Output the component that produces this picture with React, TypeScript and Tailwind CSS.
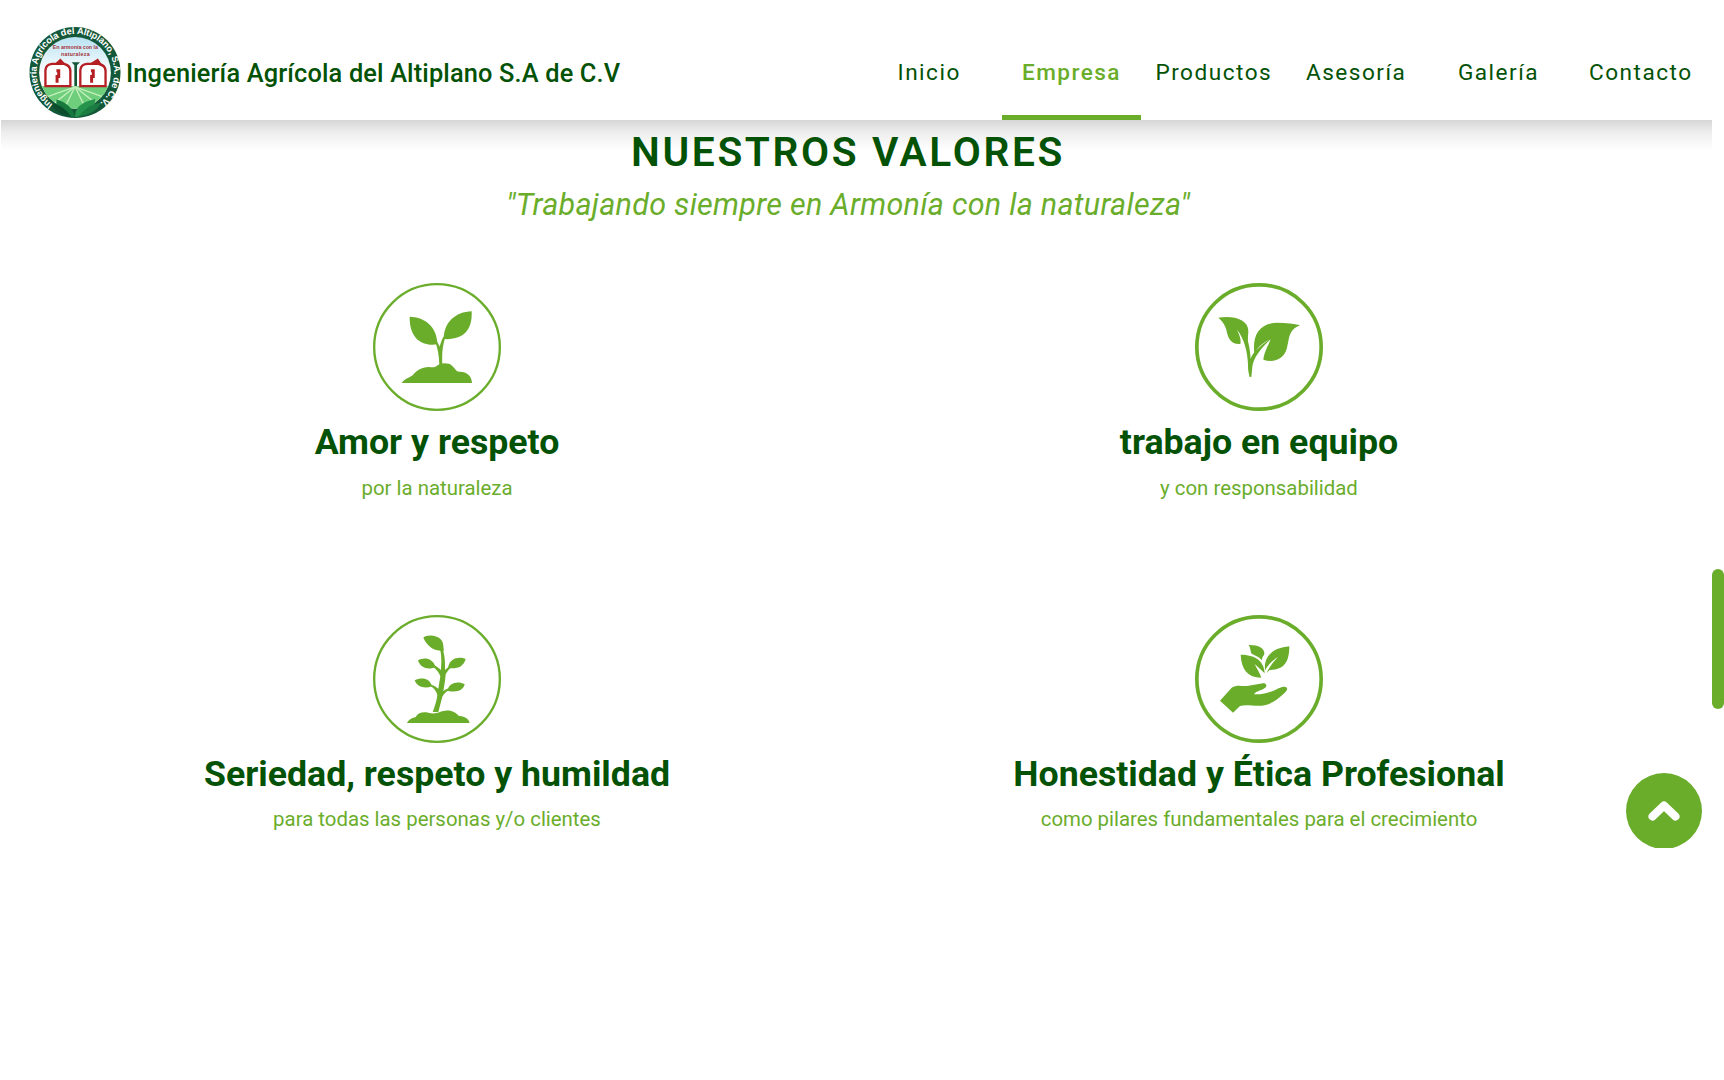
import type { ReactNode } from "react";

const navItems = ["Inicio", "Empresa", "Productos", "Asesoría", "Galería", "Contacto"];

function Logo() {
  return (
    <svg viewBox="0 0 276 280" className="h-[93px] w-[92px] shrink-0" aria-label="Logo">
      <defs>
        <path id="ring" d="M71 236A117 117 0 1 1 207 236" />
        <linearGradient id="sky" x1="0" y1="0" x2="0" y2="1">
          <stop offset="0" stopColor="#b4e0f0" />
          <stop offset="0.5" stopColor="#ffffff" />
        </linearGradient>
        <clipPath id="inner">
          <circle cx="138" cy="141" r="108" />
        </clipPath>
      </defs>
      <circle cx="138" cy="140" r="137" fill="#14583a" />
      <g clipPath="url(#inner)">
        <rect x="20" y="25" width="240" height="240" fill="url(#sky)" />
        <rect x="20" y="181" width="240" height="100" fill="#6fce7c" />
        <g stroke="#c5f0bd" strokeWidth="4">
          <path d="M138 183L30 222M138 183L60 245M138 183L100 260M138 183L176 260M138 183L216 245M138 183L246 222" />
        </g>
        <g fill="none" stroke="#b51f24" strokeWidth="7">
          <path d="M49 181V133Q50 116 69 114H105Q123 117 124 135V181Z" fill="#fff" />
          <path d="M154 181V133Q155 116 174 114H210Q229 117 230 135V181Z" fill="#fff" />
          <path d="M82 135H89V152H84V171M186 135H193V152H188V171" strokeWidth="9" />
        </g>
        <path d="M78 113L94 98L122 128L108 118ZM183 113L207 98L225 125L211 118Z" fill="#b51f24" />
        <path d="M128 109H153L144 118V181H136V118Z" fill="#14583a" />
      </g>
      <path d="M138 275Q78 261 82 221Q130 235 138 275Z" fill="#16783d" />
      <path d="M138 275Q137 232 199 220Q197 266 138 275Z" fill="#26944c" />
      <path d="M62 232Q100 235 126 272Q84 268 62 232Z" fill="#0c4d2e" />
      <path d="M218 230Q176 235 150 272Q196 268 218 230Z" fill="#1c7c42" />
      <g fill="#a3353b" fontFamily="Liberation Sans" fontWeight="700" fontSize="16" textAnchor="middle">
        <text x="139" y="68" textLength="136">En armonía con la</text>
        <text x="139" y="89" textLength="86">naturaleza</text>
      </g>
      <text fill="#fff" fontFamily="Liberation Sans" fontWeight="700" fontSize="28">
        <textPath href="#ring" textLength="582">Ingeniería Agrícola del Altiplano, S.A. de C.V.</textPath>
      </text>
    </svg>
  );
}

function Badge({ stroke, children }: { stroke: number; children: ReactNode }) {
  return (
    <svg viewBox="23 25 384 384" className="size-32 text-[#6aad2b]" fill="currentColor">
      <circle cx="215" cy="217" r={192 - stroke / 2} fill="none" stroke="currentColor" strokeWidth={stroke} />
      {children}
    </svg>
  );
}

const values = [
  {
    title: "Amor y respeto",
    text: "por la naturaleza",
    icon: (
      <Badge stroke={7}>
        <path d="M133 126C175 127 215 153 216 209C166 216 132 188 133 126Z" />
        <path d="M319 110C270 112 235 143 235 193C290 197 322 170 319 110Z" />
        <path d="M210 203C217 220 221 242 222 270H231C230 243 230 218 240 188L234 186C227 200 226 207 223 216L216 202Z" />
        <path d="M109 325C116 314 132 309 142 302C151 289 170 277 190 277C201 278 207 279 213 275C224 263 251 264 260 273C270 280 270 290 282 291C303 290 319 302 320 325Z" />
      </Badge>
    ),
  },
  {
    title: "trabajo en equipo",
    text: "y con responsabilidad",
    icon: (
      <Badge stroke={11}>
        <path d="M93 129C140 122 183 135 183 169C183 180 181 188 182 200C187 220 189 238 190 253C194 237 212 219 247 194C222 208 207 222 201 238C194 177 219 145 270 144C298 145 321 147 338 152C302 167 307 191 299 219C291 252 261 266 228 255C231 232 242 214 250 194C219 222 199 250 195 276L192 307H187C184 293 182 289 182 271C181 233 171 191 149 165C157 181 162 196 159 208C130 210 121 188 117 165C112 148 104 139 93 129Z" />
      </Badge>
    ),
  },
  {
    title: "Seriedad, respeto y humildad",
    text: "para todas las personas y/o clientes",
    icon: (
      <Badge stroke={7}>
        <path d="M174 93C182 84 213 84 226 98C236 109 233 119 236 132C207 134 186 120 174 93Z" />
        <path d="M158 161C175 151 201 152 211 181C188 191 165 184 158 161Z" />
        <path d="M148 221C168 211 193 213 200 239C178 247 156 242 148 221Z" />
        <path d="M301 157C282 148 252 153 248 184C273 188 295 181 301 157Z" />
        <path d="M298 233C279 222 249 228 247 252C272 259 294 252 298 233Z" />
        <path d="M216 112C226 126 228 143 228 163L227 190C218 183 213 178 204 175L201 179C213 188 221 198 225 209L219 246C212 240 206 236 198 234L195 238C207 245 213 254 216 265C214 285 208 299 202 316H219L231 270C236 261 241 256 251 250L249 245C242 248 237 251 234 254C237 235 240 219 241 203C246 194 250 188 259 182L256 177C250 180 244 185 239 190C240 161 237 136 230 124Z" />
        <path d="M125 349C130 338 141 334 151 331C159 317 173 315 189 318C214 325 221 313 240 312C260 310 273 319 281 328C295 328 309 334 313 349Z" />
      </Badge>
    ),
  },
  {
    title: "Honestidad y Ética Profesional",
    text: "como pilares fundamentales para el crecimiento",
    icon: (
      <Badge stroke={11}>
        <path d="M184 115C211 114 232 124 231 141C230 148 224 148 224 161C216 150 199 145 193 141C189 137 191 126 184 115Z" />
        <path d="M160 144C202 144 231 162 232 200L202 172C208 184 217 199 222 213C181 213 162 188 160 144Z" />
        <path d="M306 119C306 165 291 190 247 190L238 199C249 176 260 164 272 151C251 164 240 178 233 191C229 148 256 124 306 119Z" />
        <path d="M98 282L133 243C149 232 164 240 184 237L227 230C236 228 240 236 235 242C223 253 207 252 200 263C226 264 247 257 265 249C278 243 286 238 295 241C304 246 298 254 289 261C270 279 253 290 232 296C208 301 178 292 158 298L137 318Z" />
      </Badge>
    ),
  },
];

export default function App() {
  return (
    <div className="relative h-[1080px] w-[1724px] overflow-hidden bg-white font-['Roboto',sans-serif] text-[#035206]">
      <header className="relative mr-3 ml-px flex h-[120px] bg-white">
        <div className="flex flex-1 items-start pt-[26px] pl-7">
          <Logo />
          <span className="mt-[27px] ml-[5px] text-[25.4px] leading-[40px] font-medium tracking-[0.14px] whitespace-nowrap">
            Ingeniería Agrícola del Altiplano S.A de C.V
          </span>
        </div>
        <nav className="grid w-[854px] grid-cols-6">
          {navItems.map((item) => (
            <a
              key={item}
              className={
                item === "Empresa"
                  ? "mr-[2px] ml-[2px] border-b-[5px] border-[#6aad2b] pt-[53px] text-center text-[22.6px] leading-[40px] font-medium tracking-[1.45px] text-[#6aad2b]"
                  : "pt-[53px] text-center text-[22.6px] leading-[40px] font-[450] tracking-[1.5px]"
              }
            >
              {item}
            </a>
          ))}
        </nav>
        <div className="absolute top-full left-0 h-[30px] w-full bg-linear-to-b from-[#d6d6d6] via-[#ededed] via-40% to-transparent" />
      </header>
      <main className="relative w-[1696px]">
        <h1 className="pt-2 text-center text-[40.7px] leading-[48px] font-semibold tracking-[2.65px]">NUESTROS VALORES</h1>
        <p className="pt-[9px] text-center text-[30.5px] leading-[40px] font-[450] tracking-[0.28px] text-[#6aad2b] italic">
          "Trabajando siempre en Armonía con la naturaleza"
        </p>
        <section className="grid grid-cols-2 px-[26px] pt-[58px]">
          {values.map((v) => (
            <article key={v.title} className="flex h-[331.7px] flex-col items-center">
              {v.icon}
              <h2 className="mt-[10px] text-[35.7px] leading-[42px] font-bold">{v.title}</h2>
              <p className="mt-[8.5px] text-[20.4px] leading-[32px] text-[#6aad2b]">{v.text}</p>
            </article>
          ))}
        </section>
      </main>
      <div className="absolute top-[569px] right-0 h-[140px] w-3 rounded-full bg-[#6aad2b]" />
      <div className="absolute top-[773px] right-[22px] h-[75px] overflow-hidden">
        <button className="flex size-[76px] items-center justify-center rounded-full bg-[#6aad2b]">
          <svg viewBox="0 0 32 22" className="h-[22px] w-8" fill="none" stroke="white" strokeWidth="8" strokeLinecap="round" strokeLinejoin="round">
            <path d="M4.5 16.5L16 5.5L27.5 16.5" />
          </svg>
        </button>
      </div>
    </div>
  );
}
